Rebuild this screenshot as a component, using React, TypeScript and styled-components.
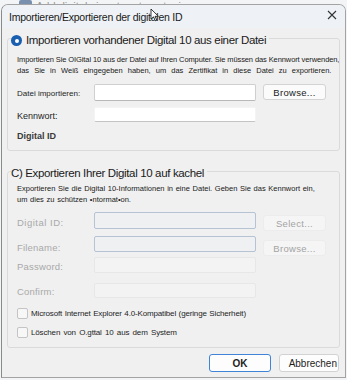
import React from "react";
import styled, { createGlobalStyle } from "styled-components";

const GlobalStyle = createGlobalStyle`
  html, body { margin: 0; padding: 0; }
  body {
    width: 347px;
    height: 380px;
    overflow: hidden;
    background: #f3f4f5;
    font-family: "Liberation Sans", Arial, sans-serif;
    color: #1b1b1b;
  }
  * { box-sizing: border-box; }
`;

const Screen = styled.div`
  position: relative;
  width: 347px;
  height: 380px;
  display: flex;
  flex-direction: column;
  padding: 0 1px 2px 1px;
`;

const Backdrop = styled.div`
  height: 4px;
  overflow: hidden;
  display: flex;
  align-items: flex-end;
  gap: 4px;
  padding-left: 18px;
`;

const BackdropCheck = styled.span`
  flex: none;
  width: 13px;
  height: 13px;
  margin-bottom: -9px;
  background: #7890ad;
  border-radius: 2px;
`;

const BackdropText = styled.span`
  font-size: 11px;
  line-height: 11px;
  color: #9a9a9a;
  margin-bottom: -8px;
  white-space: nowrap;
`;

const Dialog = styled.div`
  flex: 1;
  display: flex;
  flex-direction: column;
  border: 1px solid #a3a3a3;
  border-left-color: #8a8a8a;
  border-radius: 7px 7px 0 0;
  background: #f0f0f0;
  overflow: hidden;
`;

const TitleBar = styled.div`
  height: 23px;
  flex: none;
  display: flex;
  align-items: center;
  justify-content: space-between;
  padding: 0 8px 0 7px;
  background: #eef2f6;
`;

const Title = styled.span`
  font-size: 10.5px;
  letter-spacing: -0.25px;
  color: #1a1a1a;
  padding-top: 1px;
`;

const CloseButton = styled.span`
  display: flex;
  margin-bottom: 3px;
`;

const Body = styled.div`
  display: flex;
  flex-direction: column;
  padding: 0 5px;
`;

const Group = styled.fieldset<{ $mt: number; $pb: number }>`
  margin: ${(p) => p.$mt}px 0 0 0;
  padding: 0 0 ${(p) => p.$pb}px 0;
  border: 1px solid #dadada;
  border-radius: 3px;
  min-width: 0;
`;

const Legend = styled.legend`
  margin-left: 3px;
  padding: 3px 3px 0 0;
  display: flex;
  align-items: center;
  gap: 4px;
  font-size: 11.5px;
  line-height: 18px;
  letter-spacing: -0.35px;
  color: #1a1a1a;
`;

const Radio = styled.span`
  width: 11px;
  height: 11px;
  border-radius: 50%;
  background: #1a5eb0;
  display: flex;
  align-items: center;
  justify-content: center;
  margin-top: 1px;
  &::after {
    content: "";
    width: 4px;
    height: 4px;
    border-radius: 50%;
    background: #fff;
  }
`;

const Content = styled.div`
  display: flex;
  flex-direction: column;
  padding: 0 9px;
`;

const Desc = styled.div<{ $mt: number }>`
  margin-top: ${(p) => p.$mt}px;
  display: flex;
  flex-direction: column;
  font-size: 7.5px;
  line-height: 11px;
  color: #1a1a1a;
`;

const DescLine = styled.span<{ $ws: number; $ls?: number }>`
  white-space: nowrap;
  word-spacing: ${(p) => p.$ws}px;
  letter-spacing: ${(p) => p.$ls ?? 0}px;
`;

const Row = styled.div<{ $mt: number }>`
  margin-top: ${(p) => p.$mt}px;
  display: grid;
  grid-template-columns: 70px 162px 63px;
  column-gap: 7px;
  align-items: start;
`;

const Label = styled.span<{ $size: number; $disabled?: boolean; $ls?: number }>`
  align-self: center;
  padding-top: 2px;
  font-size: ${(p) => p.$size}px;
  letter-spacing: ${(p) => p.$ls ?? 0}px;
  color: ${(p) => (p.$disabled ? "#a9a9a9" : "#1e1e1e")};
  white-space: nowrap;
`;

const StrongLabel = styled.span<{ $mt: number }>`
  margin-top: ${(p) => p.$mt}px;
  font-size: 9px;
  line-height: 12px;
  font-weight: 700;
  color: #3a3a3a;
`;

type FieldKind = "text" | "flat" | "disabled" | "muted";

const fieldBg: Record<FieldKind, string> = {
  text: "#ffffff",
  flat: "#ffffff",
  disabled: "#eef0f2",
  muted: "#f3f3f3",
};
const fieldBorder: Record<FieldKind, string> = {
  text: "#cfcfcf",
  flat: "#f4f4f4",
  disabled: "#b5c3d5",
  muted: "#e7e7e7",
};
const fieldBottom: Record<FieldKind, string> = {
  text: "#b8b8b8",
  flat: "#c4c4c4",
  disabled: "#b5c3d5",
  muted: "#e7e7e7",
};

const Field = styled.div<{ $kind: FieldKind; $h: number }>`
  height: ${(p) => p.$h}px;
  border-radius: 2px;
  background: ${(p) => fieldBg[p.$kind]};
  border: 1px solid ${(p) => fieldBorder[p.$kind]};
  border-bottom-color: ${(p) => fieldBottom[p.$kind]};
`;

const SideButton = styled.span<{ $mt: number; $disabled?: boolean }>`
  margin-top: ${(p) => p.$mt}px;
  height: 16px;
  display: flex;
  align-items: center;
  justify-content: center;
  border-radius: 3px;
  font-size: 9.5px;
  letter-spacing: 0.3px;
  background: ${(p) => (p.$disabled ? "#f5f5f5" : "#fbfbfb")};
  border: 1px solid ${(p) => (p.$disabled ? "#ececec" : "#d3d3d3")};
  color: ${(p) => (p.$disabled ? "#a3a3a3" : "#222")};
`;

const CheckRow = styled.div<{ $mt: number }>`
  margin-top: ${(p) => p.$mt}px;
  height: 11px;
  display: flex;
  align-items: center;
  gap: 3px;
`;

const CheckBox = styled.span`
  flex: none;
  width: 11px;
  height: 11px;
  border: 1px solid #c4c4c4;
  border-radius: 2px;
  background: #f7f7f7;
`;

const CheckLabel = styled.span<{ $ws: number }>`
  font-size: 8px;
  letter-spacing: -0.15px;
  word-spacing: ${(p) => p.$ws}px;
  color: #1e1e1e;
  white-space: nowrap;
`;

const Footer = styled.div`
  margin-top: auto;
  display: flex;
  justify-content: flex-end;
  gap: 8px;
  padding: 0 6px 5px 0;
`;

const DialogButton = styled.span<{ $primary?: boolean }>`
  width: ${(p) => (p.$primary ? 62 : 60)}px;
  height: 18px;
  display: flex;
  align-items: center;
  justify-content: ${(p) => (p.$primary ? "center" : "flex-end")};
  padding-right: ${(p) => (p.$primary ? 0 : 1)}px;
  border-radius: 3px;
  background: #fdfdfd;
  border: ${(p) => (p.$primary ? "1.5px solid #3f84d6" : "1px solid #d2d2d2")};
  font-size: 10px;
  font-weight: ${(p) => (p.$primary ? 700 : 400)};
  color: #1e1e1e;
`;

const Cursor = styled.svg`
  position: absolute;
  left: 150px;
  top: 8px;
`;

export default function App() {
  return (
    <>
      <GlobalStyle />
      <Screen>
        <Backdrop>
          <BackdropCheck />
          <BackdropText>Add digital signature to outgoing messages</BackdropText>
        </Backdrop>
        <Dialog>
          <TitleBar>
            <Title>Importieren/Exportieren der digitalen ID</Title>
            <CloseButton>
              <svg width="10" height="10" viewBox="0 0 10 10">
                <path d="M1 1 L9 9 M9 1 L1 9" stroke="#333" strokeWidth="1.1" fill="none" />
              </svg>
            </CloseButton>
          </TitleBar>
          <Body>
            <Group $mt={0} $pb={8}>
              <Legend>
                <Radio />
                Importieren vorhandener Digital 10 aus einer Datei
              </Legend>
              <Content>
                <Desc $mt={5}>
                  <DescLine $ws={0} $ls={-0.1}>
                    Importieren Sie OIGital 10 aus der Datei auf Ihren Computer. Sie müssen das Kennwort verwenden,
                  </DescLine>
                  <DescLine $ws={3}>
                    das Sie in Weiß eingegeben haben, um das Zertifikat in diese Datei zu exportieren.
                  </DescLine>
                </Desc>
                <Row $mt={8}>
                  <Label $size={8}>Datei importieren:</Label>
                  <Field $kind="text" $h={17} />
                  <SideButton $mt={0}>Browse...</SideButton>
                </Row>
                <Row $mt={6}>
                  <Label $size={9}>Kennwort:</Label>
                  <Field $kind="flat" $h={15} />
                </Row>
                <StrongLabel $mt={8}>Digital ID</StrongLabel>
              </Content>
            </Group>

            <Group $mt={10} $pb={9}>
              <Legend>C) Exportieren Ihrer Digital 10 auf kachel</Legend>
              <Content>
                <Desc $mt={1}>
                  <DescLine $ws={0.6}>
                    Exportieren Sie die Digital 10-Informationen in eine Datei. Geben Sie das Kennwort ein,
                  </DescLine>
                  <DescLine $ws={0.6}>um dies zu schützen •ntormat•on.</DescLine>
                </Desc>
                <Row $mt={7}>
                  <Label $size={9.5} $ls={0.5} $disabled>
                    Digital ID:
                  </Label>
                  <Field $kind="disabled" $h={17} />
                  <SideButton $mt={3} $disabled>
                    Select...
                  </SideButton>
                </Row>
                <Row $mt={5}>
                  <Label $size={9.5} $ls={0.2} $disabled>
                    Filename:
                  </Label>
                  <Field $kind="disabled" $h={16} />
                  <SideButton $mt={4} $disabled>
                    Browse...
                  </SideButton>
                </Row>
                <Row $mt={1}>
                  <Label $size={9.5} $ls={0.2} $disabled>
                    Password:
                  </Label>
                  <Field $kind="muted" $h={16} />
                </Row>
                <Row $mt={10}>
                  <Label $size={9.5} $ls={0.2} $disabled>
                    Confirm:
                  </Label>
                  <Field $kind="muted" $h={15} />
                </Row>
                <CheckRow $mt={10}>
                  <CheckBox />
                  <CheckLabel $ws={0.5}>Microsoft Internet Explorer 4.0-Kompatibel (geringe Sicherheit)</CheckLabel>
                </CheckRow>
                <CheckRow $mt={8}>
                  <CheckBox />
                  <CheckLabel $ws={1.2}>Löschen von O.gttal 10 aus dem System</CheckLabel>
                </CheckRow>
              </Content>
            </Group>
          </Body>
          <Footer>
            <DialogButton $primary>OK</DialogButton>
            <DialogButton>Abbrechen</DialogButton>
          </Footer>
        </Dialog>
        <Cursor width="10" height="14" viewBox="0 0 10 14">
          <path d="M1 1 L1 11 L3.5 8.8 L5.3 12.8 L6.8 12.1 L5.1 8.3 L8.4 8.3 Z" fill="#fff" stroke="#222" strokeWidth="0.9" strokeLinejoin="round" />
        </Cursor>
      </Screen>
    </>
  );
}
